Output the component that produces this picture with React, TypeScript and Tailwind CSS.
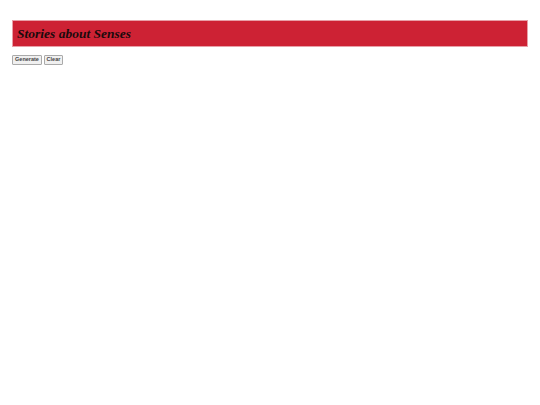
export default function App() {
  return (
    <div className="min-h-[405px] bg-white p-3 pt-5">
      <div className="h-[27px] bg-[#cd2234] border border-[#e8a0a8] flex items-center pl-[4px]">
        <h1 className="text-[13.5px] leading-none font-bold italic text-[#1a0a0c] font-['Liberation_Serif',serif]">
          Stories about Senses
        </h1>
      </div>
      <div className="mt-[8px] flex gap-[2px] font-['Liberation_Sans',sans-serif]">
        <button className="h-[10px] w-[30px] text-[5.5px] leading-none font-semibold text-[#444] bg-[#f0f0f0] border border-[#aaa] rounded-[1px]">
          Generate
        </button>
        <button className="h-[10px] w-[19px] text-[5.5px] leading-none font-semibold text-[#444] bg-[#f0f0f0] border border-[#aaa] rounded-[1px]">
          Clear
        </button>
      </div>
    </div>
  );
}
